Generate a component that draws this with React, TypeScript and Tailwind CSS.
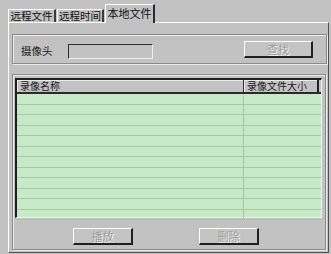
import React from "react";

const FONT = { fontFamily: '"Noto Sans CJK SC", "Noto Sans", sans-serif' };
const ROWS = Array.from({ length: 12 }, (_, i) => i);

function Tab({ label, active, w }: { label: string; active?: boolean; w: string }) {
  return (
    <div
      className={
        active
          ? `${w} h-[19px] -mb-px z-10 bg-[#c2c2c2] border-t border-l border-white border-r-2 border-r-[#2a2a2a] flex items-start justify-center pt-[1px] text-[11px] leading-[14px] text-[#111]`
          : `${w} h-[13px] bg-[#c2c2c2] border-t border-l border-white border-r-2 border-r-[#3a3a3a] flex items-center justify-center text-[10.5px] leading-[12px] text-[#111]`
      }
    >
      {label}
    </div>
  );
}

function Btn({ label, w }: { label: string; w: string }) {
  return (
    <div
      className={`${w} h-[17px] border-t border-l border-white border-r-2 border-b-2 border-r-[#202020] border-b-[#202020] bg-[#c4c4c4] flex items-center justify-center text-[11px] leading-none text-[#9a9a9a] [text-shadow:1px_1px_0_#f4f4f4]`}
    >
      {label}
    </div>
  );
}

export default function App() {
  return (
    <div className="w-[331px] h-[254px] bg-[#c2c2c2] overflow-hidden" style={FONT}>
      {/* tabs */}
      <div className="h-[22px] pl-[8px] flex items-end gap-[1px]">
        <Tab label="远程文件" w="w-[48px]" />
        <Tab label="远程时间" w="w-[47px]" />
        <Tab label="本地文件" w="w-[50px]" active />
      </div>

      {/* panel */}
      <div className="ml-[8px] w-[321px] h-[231px] border-t border-l border-white border-r border-b border-r-[#505050] border-b-[#505050] pl-[3px] pt-[11px]">
        {/* camera group */}
        <div className="w-[315px] h-[30px] border border-[#8a8a8a] shadow-[inset_1px_1px_0_#ececec,1px_1px_0_#ececec] flex items-center pl-[8px]">
          <span className="w-[47px] text-[10.5px] leading-none text-[#1a1a1a] mt-[4px]">摄像头</span>
          <div className="w-[85px] h-[15px] mt-[4px] border-t border-l border-[#303030] border-r border-b border-r-[#f0f0f0] border-b-[#f0f0f0] bg-[#c2c2c2]" />
          <div className="ml-auto mr-[13px] mt-[1px]">
            <Btn label="查找" w="w-[69px]" />
          </div>
        </div>

        {/* list group */}
        <div className="mt-[10px] w-[314px] h-[176px] border border-[#8a8a8a] shadow-[inset_1px_1px_0_#ececec,1px_1px_0_#ececec] pl-[2px] pt-[3px]">
          <div className="w-[307px] h-[140px] border-t-2 border-l-2 border-[#1e1e1e] border-r border-b border-r-[#f2f2f2] border-b-[#f2f2f2] bg-[#c6eac6] flex flex-col">
            <div className="h-[14px] flex bg-[#c2c2c2] border-b-2 border-[#2a2a2a] text-[10px] leading-[12px] text-[#1a1a1a]">
              <div className="w-[227px] pl-[3px] border-r border-[#303030] shadow-[inset_1px_1px_0_#eaeaea]">录像名称</div>
              <div className="w-[75px] pl-[3px] border-r-2 border-[#202020] shadow-[inset_1px_1px_0_#eaeaea]">录像文件大小</div>
              <div className="flex-1" />
            </div>
            {ROWS.map((i) => (
              <div
                key={i}
                className={`${i % 2 ? "h-[10px]" : "h-[11px]"} shrink-0 flex border-b border-[#a9c6a9]`}
              >
                <div className="w-[227px] border-r border-[#aac4aa]" />
                <div className="flex-1" />
              </div>
            ))}
          </div>
          <div className="mt-[10px] flex pl-[58px] gap-[66px]">
            <Btn label="播放" w="w-[60px]" />
            <Btn label="删除" w="w-[60px]" />
          </div>
        </div>
      </div>
    </div>
  );
}
